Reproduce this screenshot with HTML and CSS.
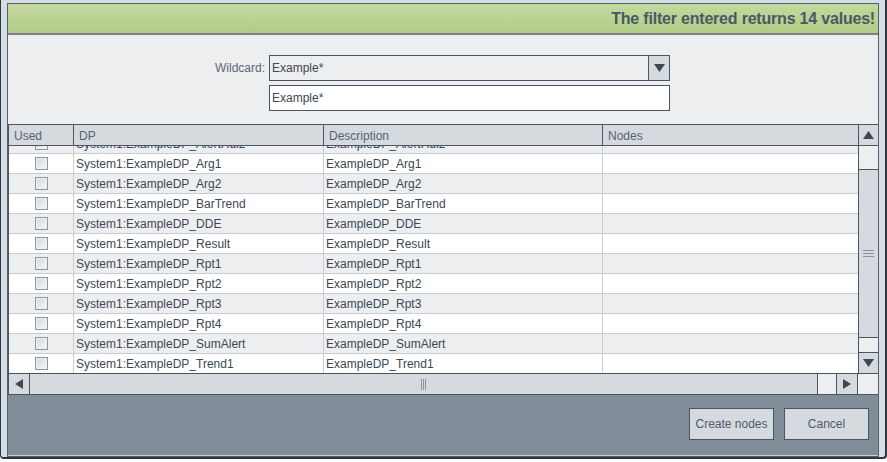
FILE: index.html
```html
<!DOCTYPE html>
<html>
<head>
<meta charset="utf-8">
<link rel="stylesheet" href="styles.css">
</head>
<body>
<div class="window">
  <div class="dialog">
    <div class="banner">The filter entered returns 14 values!</div>
    <div class="form">
      <div class="label">Wildcard:</div>
      <div class="combo">
        <span class="combo-text">Example*</span>
        <span class="combo-btn"><svg width="11" height="8" viewBox="0 0 11 8"><polygon points="0,0 11,0 5.5,8" fill="#3e4852"/></svg></span>
      </div>
      <div class="spacer"></div>
      <div class="input">Example*</div>
    </div>
    <div class="table">
      <div class="table-main">
        <div class="thead">
          <div class="th">Used</div>
          <div class="th">DP</div>
          <div class="th">Description</div>
          <div class="th last">Nodes</div>
        </div>
        <div class="tbody">
          <div class="tbody-inner">
            <div class="tr alt"><div class="td chk"><span class="cb"></span></div><div class="td">System1:ExampleDP_AlertHdl2</div><div class="td">ExampleDP_AlertHdl2</div><div class="td last"></div></div>
            <div class="tr"><div class="td chk"><span class="cb"></span></div><div class="td">System1:ExampleDP_Arg1</div><div class="td">ExampleDP_Arg1</div><div class="td last"></div></div>
            <div class="tr alt"><div class="td chk"><span class="cb"></span></div><div class="td">System1:ExampleDP_Arg2</div><div class="td">ExampleDP_Arg2</div><div class="td last"></div></div>
            <div class="tr"><div class="td chk"><span class="cb"></span></div><div class="td">System1:ExampleDP_BarTrend</div><div class="td">ExampleDP_BarTrend</div><div class="td last"></div></div>
            <div class="tr alt"><div class="td chk"><span class="cb"></span></div><div class="td">System1:ExampleDP_DDE</div><div class="td">ExampleDP_DDE</div><div class="td last"></div></div>
            <div class="tr"><div class="td chk"><span class="cb"></span></div><div class="td">System1:ExampleDP_Result</div><div class="td">ExampleDP_Result</div><div class="td last"></div></div>
            <div class="tr alt"><div class="td chk"><span class="cb"></span></div><div class="td">System1:ExampleDP_Rpt1</div><div class="td">ExampleDP_Rpt1</div><div class="td last"></div></div>
            <div class="tr"><div class="td chk"><span class="cb"></span></div><div class="td">System1:ExampleDP_Rpt2</div><div class="td">ExampleDP_Rpt2</div><div class="td last"></div></div>
            <div class="tr alt"><div class="td chk"><span class="cb"></span></div><div class="td">System1:ExampleDP_Rpt3</div><div class="td">ExampleDP_Rpt3</div><div class="td last"></div></div>
            <div class="tr"><div class="td chk"><span class="cb"></span></div><div class="td">System1:ExampleDP_Rpt4</div><div class="td">ExampleDP_Rpt4</div><div class="td last"></div></div>
            <div class="tr alt"><div class="td chk"><span class="cb"></span></div><div class="td">System1:ExampleDP_SumAlert</div><div class="td">ExampleDP_SumAlert</div><div class="td last"></div></div>
            <div class="tr"><div class="td chk"><span class="cb"></span></div><div class="td">System1:ExampleDP_Trend1</div><div class="td">ExampleDP_Trend1</div><div class="td last"></div></div>
          </div>
        </div>
      </div>
      <div class="vscroll">
        <div class="sbtn up"><svg width="11" height="8" viewBox="0 0 11 8"><polygon points="0,8 11,8 5.5,0" fill="#3e4852"/></svg></div>
        <div class="vtrack-top"></div>
        <div class="vthumb"><span class="grip-h"></span></div>
        <div class="vtrack-bottom"></div>
        <div class="sbtn down"><svg width="11" height="8" viewBox="0 0 11 8"><polygon points="0,0 11,0 5.5,8" fill="#3e4852"/></svg></div>
      </div>
    </div>
    <div class="hscroll">
      <div class="hbtn left"><svg width="8" height="10" viewBox="0 0 8 10"><polygon points="8,0 8,10 0,5" fill="#3e4852"/></svg></div>
      <div class="hthumb"><span class="grip-v"></span></div>
      <div class="htrack"></div>
      <div class="hbtn right"><svg width="8" height="10" viewBox="0 0 8 10"><polygon points="0,0 0,10 8,5" fill="#3e4852"/></svg></div>
      <div class="corner"></div>
    </div>
    <div class="footer">
      <button class="btn">Create nodes</button>
      <button class="btn">Cancel</button>
    </div>
  </div>
</div>
</body>
</html>
```

FILE: styles.css
```css
* { box-sizing: border-box; }
html, body { margin: 0; padding: 0; background: #ffffff; }
body { font-family: "Liberation Sans", Arial, sans-serif; font-size: 12px; color: #3c4753; }

.window {
  width: 887px;
  height: 459px;
  background: #d6dde5;
  border-left: 1px solid #2e3640;
  border-right: 2px solid #2e3640;
  border-bottom: 2px solid #2e3640;
  border-bottom-left-radius: 4px;
  border-bottom-right-radius: 4px;
  padding: 3px 6px 0 6px;
}

.dialog {
  border: 1px solid #56616c;
  background: #eceef0;
  display: flex;
  flex-direction: column;
  height: 454px;
}

.banner {
  height: 31px;
  background: linear-gradient(#c3d99f, #b2cb86);
  border-bottom: 2px solid #7b8087;
  text-align: right;
  padding-right: 3px;
  font-size: 16px;
  font-weight: bold;
  letter-spacing: -0.2px;
  line-height: 29px;
  color: #4a5866;
}

.form {
  height: 89px;
  display: grid;
  grid-template-columns: 257px 401px;
  grid-template-rows: 26px 26px;
  column-gap: 4px;
  row-gap: 4px;
  padding-top: 20px;
  align-content: start;
}
.label {
  text-align: right;
  line-height: 26px;
  color: #5d6874;
}
.combo {
  display: flex;
  border: 1px solid #4b5560;
  background: #eceef0;
}
.combo-text {
  flex: 1;
  padding-left: 2px;
  line-height: 24px;
  color: #3c4753;
}
.combo-btn {
  width: 21px;
  border-left: 1px solid #4b5560;
  background: #d5dadf;
  display: flex;
  align-items: center;
  justify-content: center;
}
.input {
  border: 1px solid #4b5560;
  background: #ffffff;
  padding-left: 2px;
  line-height: 24px;
  color: #3c4753;
}

.table {
  display: flex;
  height: 249px;
}
.table-main {
  width: 850px;
  border-left: 1px solid #4b5560;
  display: flex;
  flex-direction: column;
}
.thead {
  display: grid;
  grid-template-columns: 65px 250px 279px 255px;
  height: 22px;
  border-top: 1px solid #4b5560;
  border-bottom: 1px solid #4b5560;
  background: #d5dadf;
}
.th {
  border-right: 1px solid #4b5560;
  padding: 2px 0 0 5px;
  line-height: 18px;
  color: #56626e;
}
.th.last { border-right: none; }

.tbody {
  height: 227px;
  overflow: hidden;
  background: #ffffff;
}
.tbody-inner { margin-top: -12px; }
.tr {
  display: grid;
  grid-template-columns: 65px 250px 279px 255px;
  height: 20px;
  border-bottom: 1px solid #c9cdd1;
  background: #ffffff;
}
.tr.alt { background: #eceef0; }
.td {
  border-right: 1px solid #c9cdd1;
  padding: 2px 0 0 2px;
  line-height: 17px;
  white-space: nowrap;
  overflow: hidden;
  color: #3c4753;
}
.td.last { border-right: none; }
.td.chk {
  padding: 3px 0 0 0;
  display: flex;
  justify-content: center;
}
.cb {
  width: 13px;
  height: 13px;
  border: 1px solid #8f969d;
  background: linear-gradient(135deg, #d4d8dc, #f7f8f9);
  box-shadow: inset 0 0 0 1px #eef0f2;
}

.vscroll {
  width: 20px;
  border-left: 1px solid #4b5560;
  border-top: 1px solid #4b5560;
  display: flex;
  flex-direction: column;
  background: #eceef0;
}
.sbtn {
  height: 21px;
  background: #d5dadf;
  display: flex;
  align-items: center;
  justify-content: center;
}
.sbtn.up { border-bottom: 1px solid #4b5560; }
.sbtn.down { border-top: 1px solid #4b5560; }
.vtrack-top { height: 23px; }
.vthumb {
  height: 169px;
  border-top: 1px solid #4b5560;
  border-bottom: 1px solid #4b5560;
  background: #d5dadf;
  display: flex;
  align-items: center;
  justify-content: center;
}
.vtrack-bottom { height: 14px; }
.grip-h {
  width: 11px;
  height: 7px;
  border-top: 1px solid #8a949e;
  border-bottom: 1px solid #8a949e;
  background: linear-gradient(#8a949e, #8a949e) center / 100% 1px no-repeat;
}

.hscroll {
  display: flex;
  height: 22px;
  border-top: 1px solid #4b5560;
  border-bottom: 1px solid #4b5560;
  border-left: 1px solid #4b5560;
  background: #eceef0;
}
.hbtn {
  width: 21px;
  background: #d5dadf;
  display: flex;
  align-items: center;
  justify-content: center;
}
.hbtn.left { border-right: 1px solid #4b5560; }
.hbtn.right { border-left: 1px solid #4b5560; border-right: 1px solid #4b5560; width: 22px; }
.hthumb {
  width: 788px;
  border-right: 1px solid #4b5560;
  background: #d5dadf;
  display: flex;
  align-items: center;
  justify-content: center;
}
.grip-v {
  width: 5px;
  height: 11px;
  border-left: 1px solid #8a949e;
  border-right: 1px solid #8a949e;
  background: linear-gradient(#8a949e, #8a949e) center / 1px 100% no-repeat;
}
.htrack { width: 18px; }
.corner { flex: 1; background: #eceef0; }

.footer {
  flex: 1;
  background: #808d99;
  border-bottom: 1px solid #c5ccd3;
  display: flex;
  justify-content: flex-end;
  align-items: flex-start;
  gap: 10px;
  padding: 13px 9px 0 0;
}
.btn {
  width: 85px;
  height: 32px;
  border: 1px solid #4b5560;
  background: #d5dadf;
  font-family: "Liberation Sans", Arial, sans-serif;
  font-size: 12px;
  color: #505b66;
  padding: 0;
}
```
